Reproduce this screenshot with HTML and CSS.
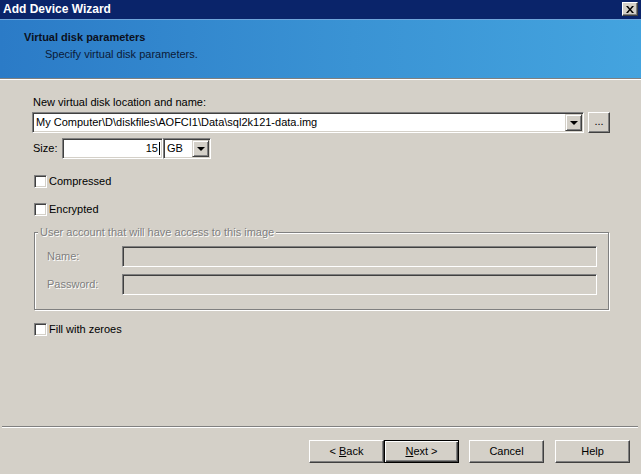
FILE: index.html
```html
<!DOCTYPE html>
<html lang="en">
<head>
    <meta charset="UTF-8">
    <title>Add Device Wizard</title>
    <link rel="stylesheet" href="styles.css">
</head>
<body>
    <div class="window">
        <div class="titlebar">
            <span class="title">Add Device Wizard</span>
            <span class="close">
                <svg width="8" height="7" viewBox="0 0 8 7">
                    <path d="M0 0h2l2 2.5L6 0h2L5 3.5 8 7H6L4 4.5 2 7H0l3-3.5z" fill="#000"/>
                </svg>
            </span>
        </div>

        <div class="header">
            <div class="header-title">Virtual disk parameters</div>
            <div class="header-sub">Specify virtual disk parameters.</div>
        </div>

        <div class="content">
            <div class="label">New virtual disk location and name:</div>
            <div class="path-row">
                <div class="combo path">
                    <span class="combo-text">My Computer\D\diskfiles\AOFCI1\Data\sql2k121-data.img</span>
                    <span class="drop"><span class="arrow"></span></span>
                </div>
                <span class="btn browse">...</span>
            </div>

            <div class="size-row">
                <span class="size-label">Size:</span>
                <div class="field size">15<span class="caret"></span></div>
                <div class="combo unit">
                    <span class="combo-text">GB</span>
                    <span class="drop"><span class="arrow"></span></span>
                </div>
            </div>

            <div class="check first"><span class="box"></span>Compressed</div>
            <div class="check"><span class="box"></span>Encrypted</div>

            <div class="group">
                <span class="legend">User account that will have access to this image</span>
                <div class="group-row">
                    <span class="group-label">Name:</span>
                    <div class="field disabled"></div>
                </div>
                <div class="group-row">
                    <span class="group-label">Password:</span>
                    <div class="field disabled"></div>
                </div>
            </div>

            <div class="check zeroes"><span class="box"></span>Fill with zeroes</div>
        </div>

        <div class="separator"></div>

        <div class="footer">
            <span class="btn">&lt;&nbsp;<u>B</u>ack</span>
            <span class="btn default"><u>N</u>ext&nbsp;&gt;</span>
            <span class="btn cancel">Cancel</span>
            <span class="btn help">Help</span>
        </div>
    </div>
</body>
</html>
```

FILE: styles.css
```css
body {
    margin: 0;
    font-family: "Liberation Sans", Arial, sans-serif;
    font-size: 11px;
    line-height: 13px;
    color: #000;
    background-color: #d4d0c8;
}

.window {
    width: 641px;
    height: 474px;
    display: flex;
    flex-direction: column;
    background-color: #d4d0c8;
    overflow: hidden;
}

.titlebar {
    height: 19px;
    flex: none;
    display: flex;
    align-items: center;
    justify-content: space-between;
    padding: 0 3px 0 3px;
    background-color: #0a246a;
}

.title {
    color: #fff;
    font-weight: bold;
    font-size: 12px;
}

.close {
    width: 14px;
    height: 12px;
    display: flex;
    align-items: center;
    justify-content: center;
    background-color: #d4d0c8;
    border: 1px solid;
    border-color: #fff #404040 #404040 #fff;
    box-shadow: inset -1px -1px #808080;
    margin-top: -1px;
}

.header {
    flex: none;
    height: 60px;
    box-sizing: border-box;
    border-top: 1px solid #6fa6dc;
    border-bottom: 1px solid #808080;
    background: linear-gradient(to right, #2b7bc7, #3a93d4 55%, #44a4df);
    padding: 11px 0 0 24px;
}

.header-title {
    font-weight: bold;
    color: #0b1020;
}

.header-sub {
    margin: 4px 0 0 21px;
    color: #0b1a38;
}

.content {
    flex: 1;
    border-top: 1px solid #fff;
    padding: 16px 0 0 32px;
}

.label {
    padding-left: 1px;
}

.path-row {
    display: flex;
    margin-top: 3px;
}

.combo, .field {
    height: 19px;
    border: 1px solid;
    border-color: #808080 #fff #fff #808080;
    box-shadow: inset 1px 1px #404040, inset -1px -1px #d4d0c8;
    background-color: #fff;
    box-sizing: content-box;
}

.combo {
    display: flex;
    align-items: center;
}

.combo-text {
    flex: 1;
    padding-left: 3px;
    white-space: nowrap;
    overflow: hidden;
}

.path {
    width: 550px;
}

.drop {
    width: 15px;
    height: 15px;
    margin-right: 1px;
    display: flex;
    align-items: center;
    justify-content: center;
    background-color: #d4d0c8;
    border: 1px solid;
    border-color: #d4d0c8 #404040 #404040 #d4d0c8;
    box-shadow: inset 1px 1px #fff, inset -1px -1px #808080;
}

.arrow {
    width: 0;
    height: 0;
    border-left: 4px solid transparent;
    border-right: 4px solid transparent;
    border-top: 4px solid #000;
    margin-top: 1px;
}

.btn {
    display: flex;
    align-items: center;
    justify-content: center;
    box-sizing: border-box;
    background-color: #d4d0c8;
    border: 1px solid;
    border-color: #fff #404040 #404040 #fff;
    box-shadow: inset -1px -1px #808080;
}

.browse {
    width: 22px;
    height: 21px;
    margin-left: 4px;
    padding-bottom: 3px;
}

.size-row {
    display: flex;
    align-items: center;
    margin-top: 5px;
}

.size-label {
    width: 29px;
    padding-left: 1px;
}

.size {
    width: 97px;
    padding-right: 2px;
    display: flex;
    align-items: center;
    justify-content: flex-end;
}

.caret {
    width: 1px;
    height: 13px;
    margin-left: 1px;
    background-color: #000;
}

.unit {
    width: 46px;
}

.check {
    display: flex;
    align-items: center;
    margin: 15px 0 0 2px;
    height: 13px;
}

.check.first {
    margin-top: 16px;
}

.box {
    width: 11px;
    height: 11px;
    margin-right: 2px;
    background-color: #fff;
    border: 1px solid;
    border-color: #808080 #fff #fff #808080;
    box-shadow: inset 1px 1px #404040, inset -1px -1px #d4d0c8;
}

.group {
    width: 550px;
    margin: 16px 0 0 2px;
    padding: 0 11px 14px 12px;
    border: 1px solid #808080;
    box-shadow: inset 1px 1px #fff, 1px 1px #fff;
}

.legend {
    display: table;
    margin: -7px 0 0 -9px;
    padding: 0 2px;
    background-color: #d4d0c8;
    color: #808080;
    text-shadow: 1px 1px #fff;
}

.group-row {
    display: flex;
    align-items: center;
    margin-top: 7px;
}

.group-label {
    width: 75px;
    color: #808080;
    text-shadow: 1px 1px #fff;
}

.field.disabled {
    flex: 1;
    background-color: #d4d0c8;
}

.check.zeroes {
    margin-top: 13px;
}

.separator {
    flex: none;
    height: 0;
    margin: 0 3px 0 2px;
    border-top: 1px solid #808080;
    border-bottom: 1px solid #fff;
}

.footer {
    flex: none;
    height: 46px;
    display: flex;
    justify-content: flex-end;
    padding: 12px 11px 0 0;
    box-sizing: border-box;
}

.footer .btn {
    width: 75px;
    height: 23px;
}

.footer .default {
    border: 1px solid #000;
    box-shadow: inset 1px 1px #fff, inset -1px -1px #404040, inset -2px -2px #808080;
}

.footer .cancel {
    margin-left: 10px;
}

.footer .help {
    margin-left: 11px;
}
```
